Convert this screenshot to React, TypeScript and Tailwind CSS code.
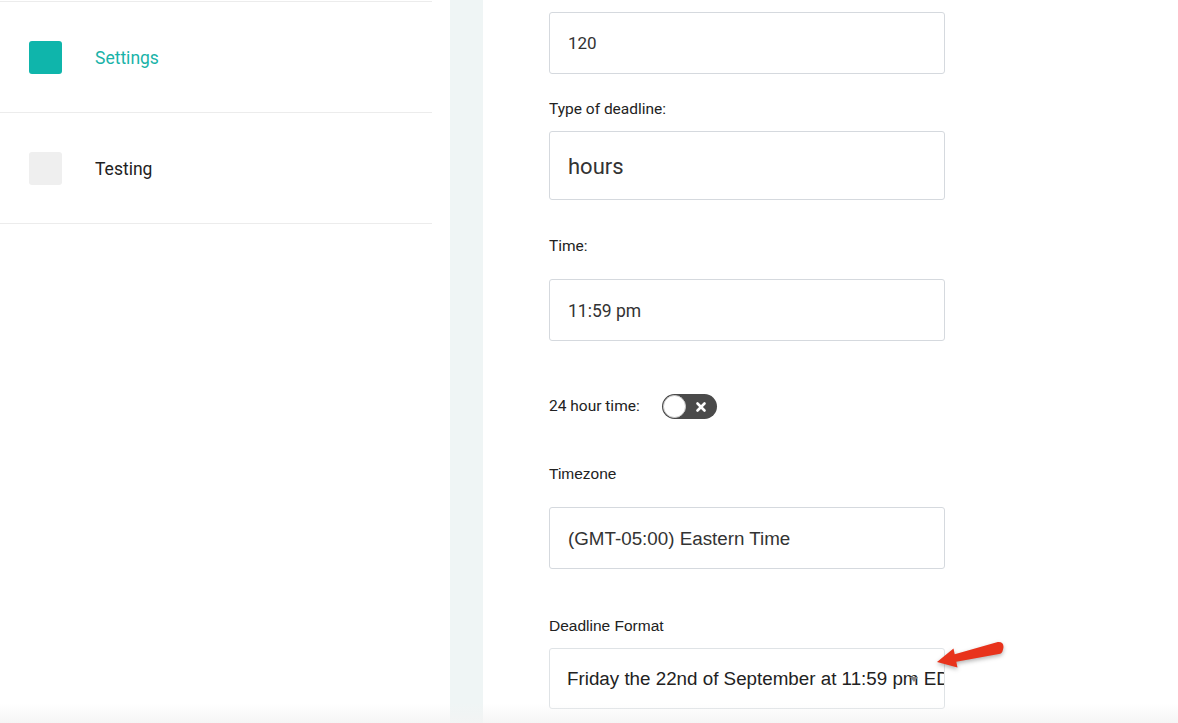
import { X } from 'lucide-react'

const roboto = 'font-[Roboto,"Liberation_Sans",sans-serif]'
const arial = 'font-["Liberation_Sans",Arial,sans-serif]'

function NavItem({ label, active }: { label: string; active?: boolean }) {
  return (
    <div className="flex h-[111px] items-center border-b border-[#ececec] pl-[29px]">
      <div className={`h-[33px] w-[33px] rounded-[3px] ${active ? 'bg-[#0fb5ab]' : 'bg-[#efefef]'}`} />
      <span className={`ml-[33px] pt-[2px] text-[17.5px] ${active ? 'text-[#19b3a8]' : 'text-[#222]'}`}>{label}</span>
    </div>
  )
}

function Field({ children, className = '' }: { children: React.ReactNode; className?: string }) {
  return (
    <div className={`flex w-[396px] items-center rounded-[3px] border border-[#d5d9de] bg-white px-[18px] pt-[2px] text-[#333] ${className}`}>
      {children}
    </div>
  )
}

function Label({ children, className = '' }: { children: React.ReactNode; className?: string }) {
  return <div className={`h-[20px] pt-[1px] text-[15.5px] leading-[20px] text-[#222] ${className}`}>{children}</div>
}

export default function App() {
  return (
    <div className={`relative flex h-[723px] w-[1178px] overflow-hidden bg-white ${roboto}`}>
      <aside className="w-[432px] shrink-0 pt-[1px]">
        <div className="border-t border-[#ececec]">
          <NavItem label="Settings" active />
          <NavItem label="Testing" />
        </div>
      </aside>
      <div className="w-[18px] shrink-0" />
      <div className="w-[33px] shrink-0 bg-[#eff5f5]" />
      <main className="flex-1 pl-[66px] pt-[12px]">
        <Field className="h-[62px] text-[17px]">120</Field>
        <Label className="mt-[24px]">Type of deadline:</Label>
        <Field className="mt-[13px] h-[69px] text-[22px]">hours</Field>
        <Label className="mt-[35px]">Time:</Label>
        <Field className="mt-[24px] h-[62px] text-[17.5px]">11:59 pm</Field>
        <div className="mt-[53px] flex h-[25px] items-center">
          <span className="text-[15.5px] text-[#222]">24 hour time:</span>
          <div className="ml-[22px] flex h-[25px] w-[55px] items-center rounded-full bg-[#4a4a4a] px-[1px]">
            <div className="h-[23px] w-[23px] rounded-full border border-[#ccc] bg-white" />
            <X className="ml-[8px] text-white" size={14} strokeWidth={4.5} />
          </div>
        </div>
        <Label className={`mt-[44px] ${arial}`}>Timezone</Label>
        <Field className={`mt-[24px] h-[62px] text-[18.8px] ${arial}`}>(GMT-05:00) Eastern Time</Field>
        <Label className={`mt-[46px] ${arial}`}>Deadline Format</Label>
        <div className="relative mt-[13px] w-[396px]">
          <div className={`flex h-[61px] w-[396px] items-center overflow-hidden whitespace-nowrap rounded-[3px] border border-[#dfe3e6] bg-white pl-[17px] pt-[2px] text-[18.8px] text-[#222] ${arial}`}>
            Friday the 22nd of September at 11:59 pm EDT
          </div>
          <svg className="absolute left-[360px] top-[28px]" width="10" height="7" viewBox="0 0 10 7">
            <path d="M1 1 L9 1 L5 6 Z" fill="#888" />
          </svg>
          <svg className="absolute left-[382px] top-[-14px] drop-shadow-[0_2px_2px_rgba(0,0,0,0.3)]" width="76" height="38" viewBox="0 0 76 38">
            <path d="M6 28 L22.5 14.5 L23.7 20.2 L66.8 8 Q72.5 7.5 72.5 13 Q72 18.5 69.2 19.8 L25.3 27.8 L26.5 33.5 Z" fill="#e8331c" />
          </svg>
        </div>
      </main>
      <div className="pointer-events-none absolute bottom-0 left-0 h-[20px] w-full bg-gradient-to-b from-transparent to-[#f3f3f3]/80" />
    </div>
  )
}
